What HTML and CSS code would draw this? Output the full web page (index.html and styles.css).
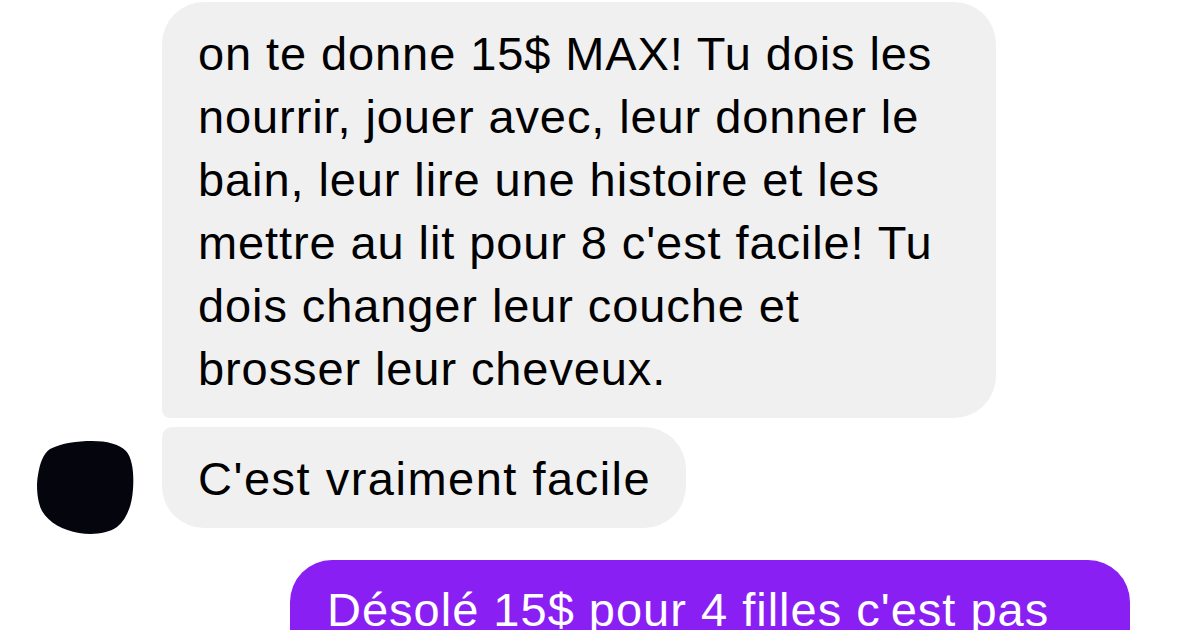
FILE: index.html
```html
<!DOCTYPE html>
<html lang="fr">
<head>
<meta charset="UTF-8">
<meta name="viewport" content="width=device-width, initial-scale=1.0">
<title>Conversation</title>
<link rel="stylesheet" href="styles.css">
</head>
<body>
<div class="thread">
  <div class="row">
    <div class="slot"></div>
    <div class="bubble in first">on te donne 15$ MAX! Tu dois les<br>nourrir, jouer avec, leur donner le<br>bain, leur lire une histoire et les<br>mettre au lit pour 8 c'est facile! Tu<br>dois changer leur couche et<br>brosser leur cheveux.</div>
  </div>
  <div class="row">
    <div class="slot">
      <!-- hidden profile picture, scribbled out -->
      <svg class="avatar" width="97" height="94" viewBox="0 0 97 94">
        <path d="M13 8 C25 2 40 0 55 0 C70 0 82 3 89 10 C96 18 97 34 96 48 C95 64 90 78 80 86 C70 93 55 94 42 92 C26 89 12 82 5 70 C0 60 -1 44 1 34 C3 22 6 13 13 8 Z" fill="#05060d"/>
      </svg>
    </div>
    <div class="bubble in last">C'est vraiment facile</div>
  </div>
  <div class="row out">
    <div class="bubble mine">Désolé 15$ pour 4 filles c'est pas<br>assez</div>
  </div>
</div>
</body>
</html>
```

FILE: styles.css
```css
body {
  margin: 0;
  width: 1200px;
  height: 630px;
  overflow: hidden;
  background: #ffffff;
  font-family: "Liberation Sans", Arial, sans-serif;
}

.thread {
  display: flex;
  flex-direction: column;
  padding-top: 2px;
}

.row {
  display: flex;
  align-items: flex-end;
}

.row + .row {
  margin-top: 9px;
}

.row.out {
  justify-content: flex-end;
  margin-top: 32px;
  padding-right: 70px;
}

.slot {
  width: 162px;
  flex-shrink: 0;
  box-sizing: border-box;
  padding-left: 37px;
}

.avatar {
  display: block;
  margin-bottom: -7px;
}

.bubble {
  box-sizing: border-box;
  font-size: 47px;
  line-height: 63px;
  letter-spacing: 0.9px;
  padding: 20px 35px 18px 36px;
  border-radius: 42px;
}

.bubble.in {
  background: #f0f0f0;
  color: #000000;
}

.bubble.first {
  width: 834px;
  border-bottom-left-radius: 8px;
}

.bubble.last {
  letter-spacing: 1.5px;
  border-top-left-radius: 10px;
}

.bubble.mine {
  width: 840px;
  background: #8a1ff3;
  color: #ffffff;
  padding-top: 18px;
  padding-left: 37px;
  letter-spacing: 1px;
}
```
